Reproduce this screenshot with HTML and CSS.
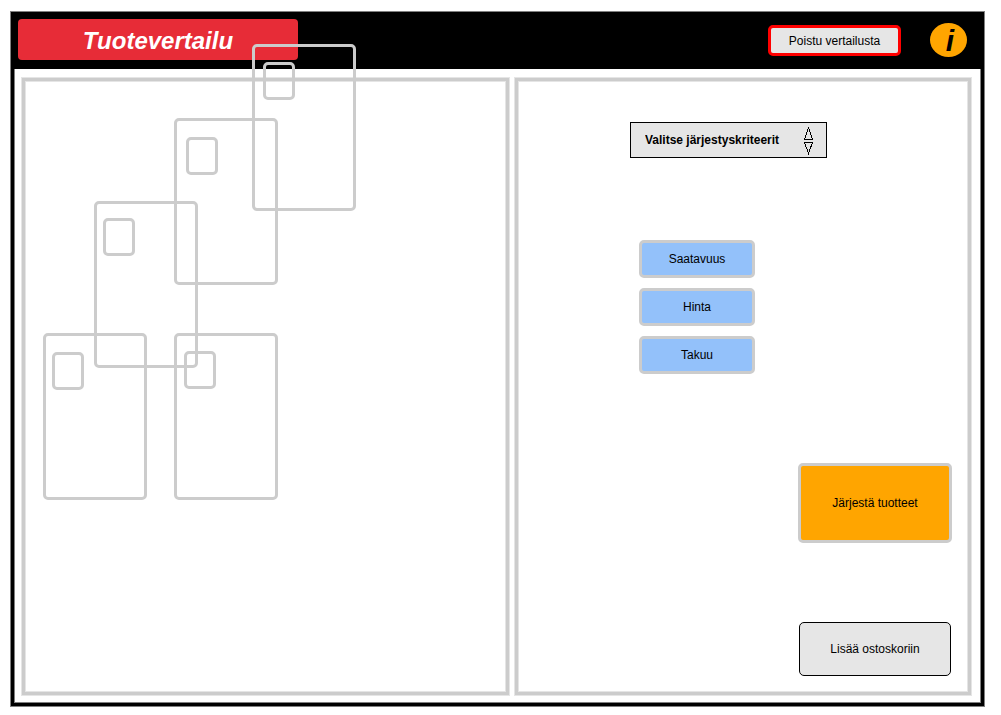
FILE: index.html
```html
<!DOCTYPE html>
<html lang="fi">
<head>
<meta charset="utf-8">
<title>Tuotevertailu</title>
<link rel="stylesheet" href="styles.css">
</head>
<body>
<div class="frame">
  <header class="topbar">
    <h1 class="title">Tuotevertailu</h1>
    <div class="topbar-actions">
      <button class="button exit" type="button">Poistu vertailusta</button>
      <button class="info" type="button">i</button>
    </div>
  </header>
  <main class="panels">
    <section class="panel canvas">
      <div class="card card-1"></div>
      <input class="pick pick-1" type="checkbox" aria-label="Tuote 1">
      <div class="card card-2"></div>
      <input class="pick pick-2" type="checkbox" aria-label="Tuote 2">
      <div class="card card-3"></div>
      <input class="pick pick-3" type="checkbox" aria-label="Tuote 3">
      <div class="card card-4"></div>
      <input class="pick pick-4" type="checkbox" aria-label="Tuote 4">
      <div class="card card-5"></div>
      <input class="pick pick-5" type="checkbox" aria-label="Tuote 5">
    </section>
    <section class="panel sorting">
      <div class="sort-fields">
        <div class="select-wrap">
          <select class="select" aria-label="Valitse järjestyskriteerit">
            <option>Valitse järjestyskriteerit</option>
          </select>
          <svg class="select-arrows" width="11" height="28" viewBox="0 0 11 28" fill="none" stroke="#000" shape-rendering="crispEdges" aria-hidden="true">
            <path d="M5.5 0.5 L9.5 12.5 H1.5 Z"/>
            <path d="M1.5 15.5 H9.5 L5.5 26.5 Z"/>
          </svg>
        </div>
        <div class="criteria">
          <button class="button criterion" type="button">Saatavuus</button>
          <button class="button criterion" type="button">Hinta</button>
          <button class="button criterion" type="button">Takuu</button>
        </div>
      </div>
      <div class="actions">
        <button class="button sort" type="button">Järjestä tuotteet</button>
        <button class="button add" type="button">Lisää ostoskoriin</button>
      </div>
    </section>
  </main>
</div>
</body>
</html>
```

FILE: styles.css
```css
* {
  box-sizing: border-box;
}

body {
  margin: 0;
  min-height: 100vh;
  padding: 11px 16px 8px 10px;
  display: flex;
  background: #fff;
  color: #000;
  font: 12px/16px "Liberation Sans", Arial, sans-serif;
}

.frame {
  flex: 1;
  display: flex;
  flex-direction: column;
  padding: 4px;
  box-shadow: inset 0 0 0 1px #808080, inset 0 0 0 4px #000, inset 0 0 0 5px #808080;
}

.topbar {
  display: flex;
  justify-content: space-between;
  align-items: flex-start;
  padding: 4px 14px 9px 4px;
  background: #000;
}

.title {
  margin: 0;
  width: 280px;
  padding: 7px 0 4px;
  border-radius: 4px;
  background: #e72c37;
  color: #fff;
  font-size: 24px;
  line-height: 30px;
  font-style: italic;
  text-align: center;
}

.topbar-actions {
  display: flex;
  align-items: center;
  gap: 29px;
  padding-top: 4px;
}

.button {
  padding: 0;
  border: 3px solid #ccc;
  border-radius: 5px;
  color: #000;
  font: inherit;
  text-align: center;
}

.exit {
  width: 133px;
  height: 31px;
  padding-top: 1px;
  border-color: #f00;
  background: #e6e6e6;
}

.info {
  width: 37px;
  height: 34px;
  padding: 2px 0 0 3px;
  border: 0;
  border-radius: 50%;
  background: #ffa500;
  color: #000;
  font: italic bold 30px/32px "Liberation Sans", Arial, sans-serif;
}

.panels {
  flex: 1;
  display: grid;
  grid-template-columns: 489fr 458fr;
  gap: 4px;
  padding: 8px 9px 7px 7px;
}

.panel {
  box-shadow: inset 0 0 0 1px #e5e5e5, inset 0 0 0 4px #ccc, inset 0 0 0 5px #e5e5e5;
}

.canvas {
  position: relative;
}

/* Product cards and their tick boxes lie freely on the canvas */
.card {
  position: absolute;
  width: 104px;
  height: 167px;
  border: 3px solid #ccc;
  border-radius: 5px;
}

.pick {
  position: absolute;
  appearance: none;
  width: 32px;
  height: 38px;
  margin: 0;
  border: 3px solid #ccc;
  border-radius: 5px;
}

.card-1 { left: 231px; top: -33px; }
.card-2 { left: 153px; top: 41px; }
.card-3 { left: 73px; top: 124px; }
.card-4 { left: 22px; top: 256px; }
.card-5 { left: 153px; top: 256px; }

.pick-1 { left: 242px; top: -15px; }
.pick-2 { left: 165px; top: 60px; }
.pick-3 { left: 82px; top: 141px; }
.pick-4 { left: 31px; top: 275px; }
.pick-5 { left: 163px; top: 274px; }

.sorting {
  display: flex;
  flex-direction: column;
  justify-content: space-between;
  padding: 45px 20px 20px 116px;
}

.sort-fields {
  display: flex;
  flex-direction: column;
  align-items: flex-start;
  gap: 82px;
}

.select-wrap {
  position: relative;
}

.select {
  display: block;
  appearance: none;
  width: 197px;
  height: 36px;
  padding: 0 14px;
  border: 1px solid #000;
  border-radius: 0;
  background: #e6e6e6;
  color: #000;
  font: inherit;
  font-weight: bold;
}

.select-arrows {
  position: absolute;
  right: 13px;
  top: 5px;
  pointer-events: none;
}

.criteria {
  display: flex;
  flex-direction: column;
  gap: 10px;
  padding-left: 9px;
}

.criterion {
  width: 116px;
  height: 38px;
  background: #93c1fa;
}

.actions {
  align-self: flex-end;
  display: flex;
  flex-direction: column;
  align-items: center;
  gap: 79px;
}

.sort {
  width: 154px;
  height: 80px;
  background: #ffa500;
}

.add {
  width: 152px;
  height: 54px;
  border: 1px solid #000;
  background: #e6e6e6;
}
```
